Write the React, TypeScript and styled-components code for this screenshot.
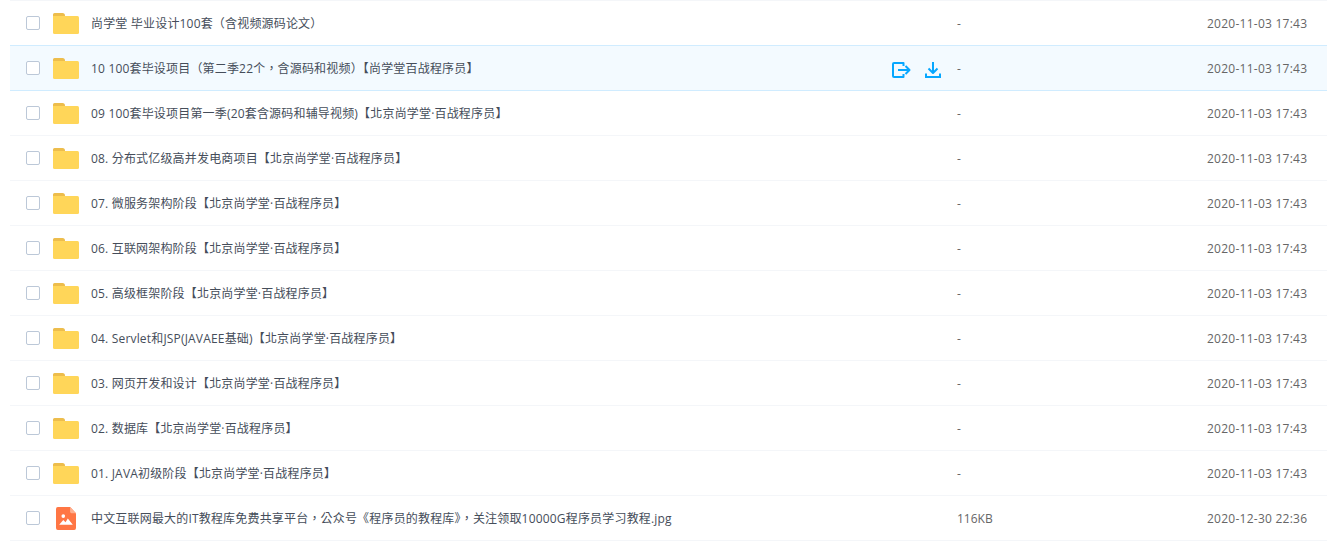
import React from "react";
import styled, { createGlobalStyle } from "styled-components";

const Global = createGlobalStyle`
  html, body { margin: 0; padding: 0; background: #fff; }
  body { font-family: "Open Sans", "Noto Sans CJK TC", sans-serif; font-size: 12px; overflow: hidden; }
`;

const List = styled.div`
  margin-left: 10px;
  border-top: 1px solid #f4f6f9;
`;

const Row = styled.div<{ $active?: boolean }>`
  box-sizing: border-box;
  display: grid;
  grid-template-columns: 1fr 250px 120px;
  align-items: center;
  height: ${(p) => (p.$active ? "46px" : "45px")};
  margin-top: ${(p) => (p.$active ? "-1px" : "0")};
  background: ${(p) => (p.$active ? "#f3faff" : "#fff")};
  border-top: ${(p) => (p.$active ? "1px solid #d0ecff" : "0")};
  border-bottom: 1px solid ${(p) => (p.$active ? "#d0ecff" : "#f4f6f9")};
`;

const NameCell = styled.div`
  display: flex;
  align-items: center;
  padding: 0 16px;
  min-width: 0;
`;

const Check = styled.span`
  width: 12px;
  height: 12px;
  flex: none;
  border: 1px solid #bcc8d8;
  border-radius: 2px;
  background: #fff;
  margin-right: 13px;
`;

const IconBox = styled.span`
  width: 26px;
  height: 23px;
  flex: none;
  margin-right: 12px;
  display: flex;
  align-items: center;
  justify-content: center;
`;

const Name = styled.span`
  color: #454d5a;
  letter-spacing: 0.18px;
  white-space: nowrap;
`;

const Actions = styled.div`
  margin-left: auto;
  padding-top: 4px;
  display: flex;
  align-items: center;
  gap: 14px;
`;

const Size = styled.div`
  color: #666;
`;

const Time = styled.div`
  color: #666;
  text-align: right;
  padding-right: 20px;
  letter-spacing: 0.25px;
  white-space: nowrap;
`;

const Folder = () => (
  <svg width="26" height="21" viewBox="0 0 26 21">
    <path d="M0 1.500A1.500 1.500 0 0 1 1.500 0H9.500A2.500 2.500 0 0 1 12 2.500V3H0z" fill="#edbd4c" />
    <path d="M0 3h24.500A1.500 1.500 0 0 1 26 4.500V19.500a1.500 1.500 0 0 1-1.500 1.500h-23A1.500 1.500 0 0 1 0 19.500z" fill="#ffd659" />
  </svg>
);

const ImageFile = () => (
  <svg width="20" height="23" viewBox="0 0 22 24" preserveAspectRatio="none">
    <path d="M2 0h13.500L22 6.500V22a2 2 0 0 1-2 2H2a2 2 0 0 1-2-2V2a2 2 0 0 1 2-2z" fill="#ff7644" />
    <path d="M15.500 0 22 6.500h-5a1.500 1.500 0 0 1-1.500-1.500z" fill="#ffb08f" />
    <circle cx="8" cy="9.500" r="2" fill="#fff" />
    <path d="M3.500 18.500 8 13.500l2.500 2.500 2.500-4 5.500 6.500z" fill="#fff" />
  </svg>
);

const ShareIcon = () => (
  <svg width="19" height="16" viewBox="0 0 19 16" fill="none" stroke="#06a7ff" strokeWidth="2">
    <path d="M11.500 4V1H2a1 1 0 0 0-1 1v12a1 1 0 0 0 1 1h9.500v-3" strokeLinejoin="round" />
    <path d="M6 8h11.500M13.500 4l4 4-4 4" strokeLinejoin="round" />
  </svg>
);

const DownloadIcon = () => (
  <svg width="16" height="16" viewBox="0 0 16 16" fill="none" stroke="#06a7ff" strokeWidth="2">
    <path d="M8 0v10.500" />
    <path d="M3.500 6.500 8 11l4.500-4.500" strokeLinejoin="round" />
    <path d="M1 11.500V15h14v-3.500" />
  </svg>
);

const folderDate = "2020-11-03 17:43";
const rows: { name: string; active?: boolean; file?: boolean; size?: string; time?: string }[] = [
  { name: "尚学堂 毕业设计100套（含视频源码论文）" },
  { name: "10 100套毕设项目（第二季22个，含源码和视频）【尚学堂百战程序员】", active: true },
  { name: "09 100套毕设项目第一季(20套含源码和辅导视频)【北京尚学堂·百战程序员】" },
  { name: "08. 分布式亿级高并发电商项目【北京尚学堂·百战程序员】" },
  { name: "07. 微服务架构阶段【北京尚学堂·百战程序员】" },
  { name: "06. 互联网架构阶段【北京尚学堂·百战程序员】" },
  { name: "05. 高级框架阶段【北京尚学堂·百战程序员】" },
  { name: "04. Servlet和JSP(JAVAEE基础)【北京尚学堂·百战程序员】" },
  { name: "03. 网页开发和设计【北京尚学堂·百战程序员】" },
  { name: "02. 数据库【北京尚学堂·百战程序员】" },
  { name: "01. JAVA初级阶段【北京尚学堂·百战程序员】" },
  { name: "中文互联网最大的IT教程库免费共享平台，公众号《程序员的教程库》，关注领取10000G程序员学习教程.jpg", file: true, size: "116KB", time: "2020-12-30 22:36" },
];

export default function App() {
  return (
    <>
      <Global />
      <List>
        {rows.map((r) => (
          <Row key={r.name} $active={r.active}>
            <NameCell>
              <Check />
              <IconBox>{r.file ? <ImageFile /> : <Folder />}</IconBox>
              <Name>{r.name}</Name>
              {r.active && (
                <Actions>
                  <ShareIcon />
                  <DownloadIcon />
                </Actions>
              )}
            </NameCell>
            <Size>{r.size ?? "-"}</Size>
            <Time>{r.time ?? folderDate}</Time>
          </Row>
        ))}
      </List>
    </>
  );
}
